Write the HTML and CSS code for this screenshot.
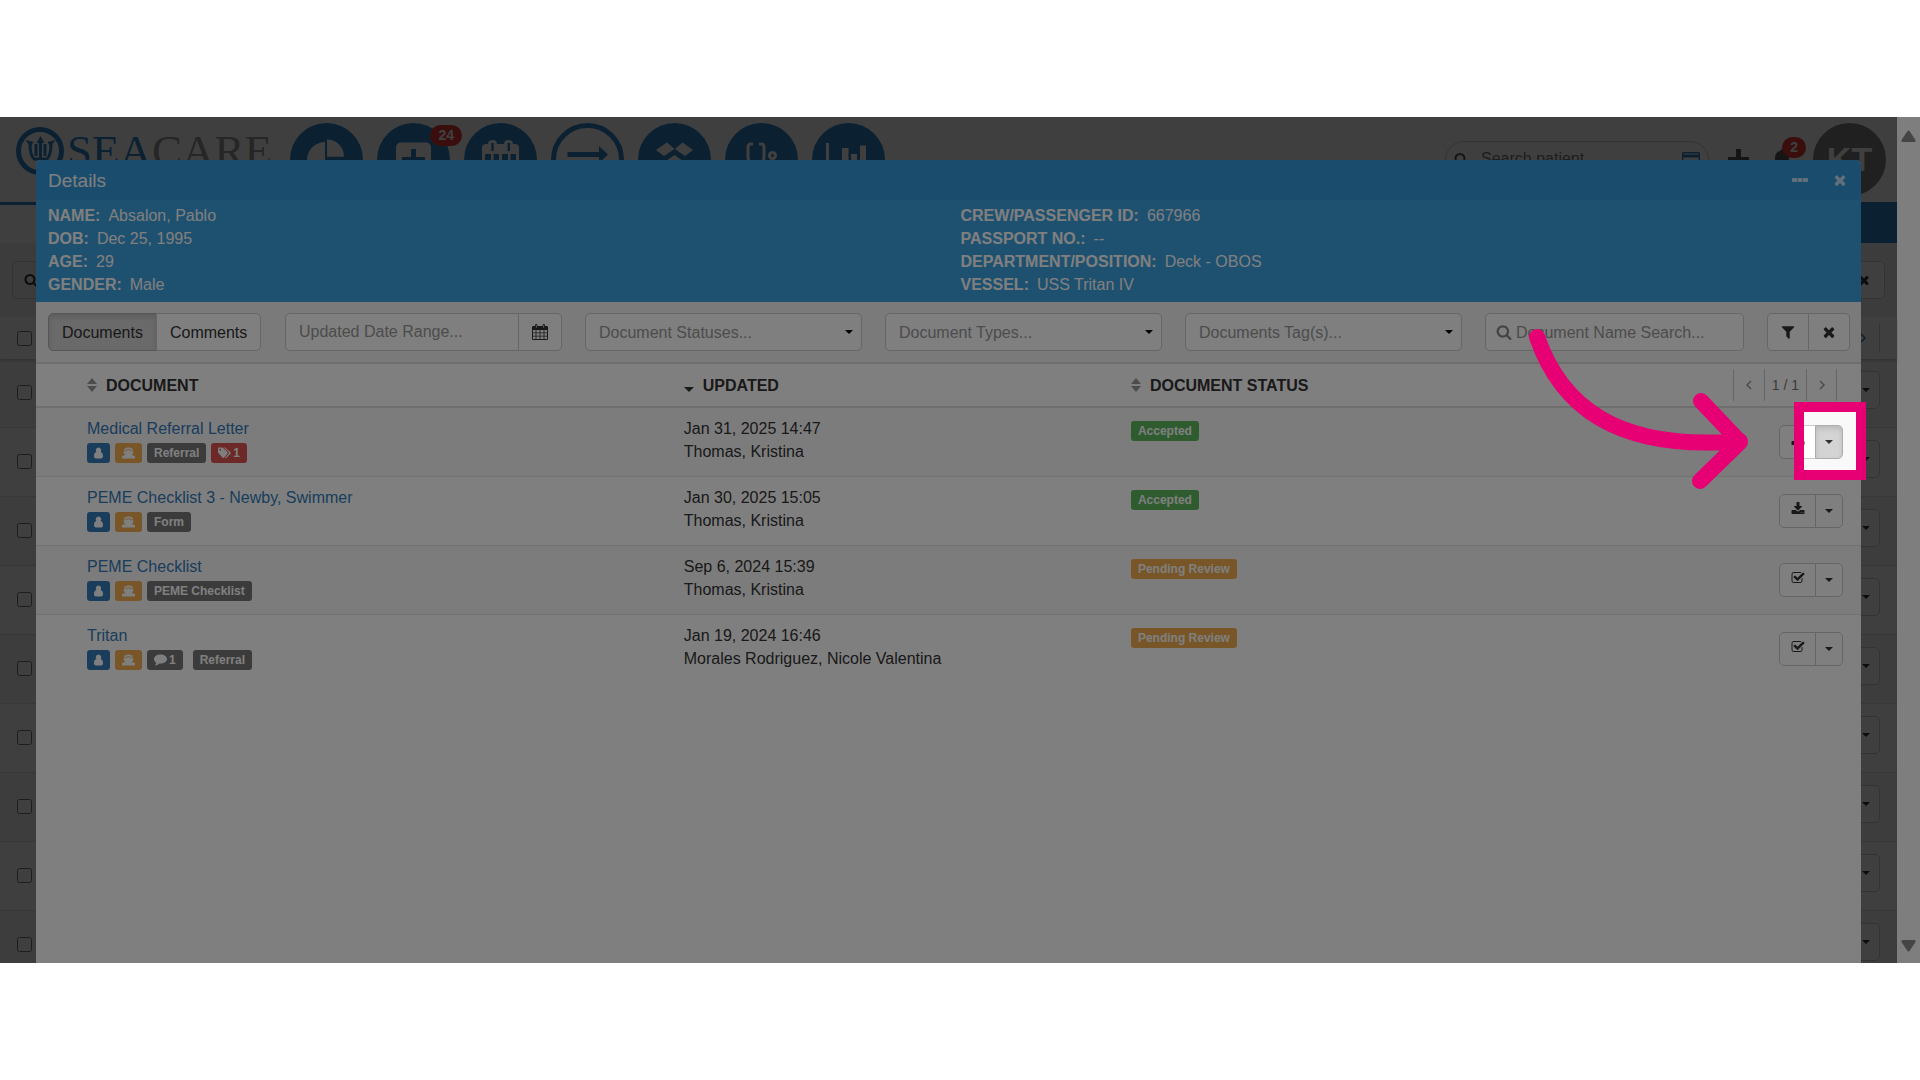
FILE: index.html
```html
<!DOCTYPE html>
<html lang="en">
<head>
    <meta charset="UTF-8">
    <meta name="viewport" content="width=device-width, initial-scale=1">
    <title>SeaCare - Documents</title>
    <link rel="stylesheet" href="styles.css">
</head>
<body>
<!-- icon sprite -->
<svg class="sprite" aria-hidden="true">
    <symbol id="i-search" viewBox="0 0 1792 1792"><path d="M1216 832q0-185-131.500-316.500t-316.500-131.500-316.500 131.500-131.500 316.500 131.500 316.500 316.500 131.500 316.500-131.500 131.500-316.500zm512 832q0 52-38 90t-90 38q-54 0-90-38l-343-342q-179 124-399 124-143 0-273.500-55.500t-225-150-150-225-55.500-273.500 55.500-273.500 150-225 225-150 273.500-55.500 273.500 55.500 225 150 150 225 55.500 273.500q0 220-124 399l343 343q37 37 37 90z"/></symbol>
    <symbol id="i-filter" viewBox="0 0 1792 1792"><path d="M1595 295q17 41-14 70l-493 493v742q0 42-39 59-13 5-25 5-27 0-45-19l-256-256q-19-19-19-45v-486l-493-493q-31-29-14-70 17-39 59-39h1280q42 0 59 39z"/></symbol>
    <symbol id="i-times" viewBox="0 0 1792 1792"><path d="M1490 1322q0 40-28 68l-136 136q-28 28-68 28t-68-28l-294-294-294 294q-28 28-68 28t-68-28l-136-136q-28-28-28-68t28-68l294-294-294-294q-28-28-28-68t28-68l136-136q28-28 68-28t68 28l294 294 294-294q28-28 68-28t68 28l136 136q28 28 28 68t-28 68l-294 294 294 294q28 28 28 68z"/></symbol>
    <symbol id="i-download" viewBox="0 0 1792 1792"><path d="M1344 1344q0-26-19-45t-45-19-45 19-19 45 19 45 45 19 45-19 19-45zm256 0q0-26-19-45t-45-19-45 19-19 45 19 45 45 19 45-19 19-45zm128-224v320q0 40-28 68t-68 28h-1472q-40 0-68-28t-28-68v-320q0-40 28-68t68-28h465l135 136q58 56 136 56t136-56l136-136h464q40 0 68 28t28 68zm-325-569q17 41-14 70l-448 448q-18 19-45 19t-45-19l-448-448q-31-29-14-70 17-39 59-39h256v-448q0-26 19-45t45-19h256q26 0 45 19t19 45v448h256q42 0 59 39z"/></symbol>
    <symbol id="i-check" viewBox="0 0 1792 1792"><path d="M1472 930v318q0 119-84.500 203.500t-203.500 84.500h-832q-119 0-203.500-84.500t-84.500-203.500v-832q0-119 84.500-203.500t203.500-84.500h832q63 0 117 25 15 7 18 23 3 17-9 29l-49 49q-10 10-23 10-3 0-9-2-23-6-45-6h-832q-66 0-113 47t-47 113v832q0 66 47 113t113 47h832q66 0 113-47t47-113v-254q0-13 9-22l64-64q10-10 23-10 6 0 12 3 20 8 20 29zm231-489l-814 814q-24 24-57 24t-57-24l-430-430q-24-24-24-57t24-57l110-110q24-24 57-24t57 24l263 263 647-647q24-24 57-24t57 24l110 110q24 24 24 57t-24 57z"/></symbol>
    <symbol id="i-calendar" viewBox="0 0 16 16"><path fill-rule="evenodd" d="M3 2V1.300Q3 0 4.200 0t1.200 1.300V2h5.200V1.300Q10.600 0 11.800 0T13 1.300V2h1.800q1.200 0 1.200 1.200v11.600q0 1.200-1.200 1.200H1.200Q0 16 0 14.800V3.200Q0 2 1.200 2zM3.900 1.200v2.600h.7V1.200zm7.500 0v2.600h.7V1.200zM1 6v2.500h2.600V6zm3.400 0v2.500h3.200V6zm4 0v2.500h3.200V6zm4 0v2.500H15V6zM1 9.200v2.600h2.600V9.200zm3.400 0v2.600h3.200V9.200zm4 0v2.600h3.200V9.200zm4 0v2.600H15V9.200zM1 12.600V15h2.600v-2.400zm3.400 0V15h3.200v-2.400zm4 0V15h3.200v-2.400zm4 0V15H15v-2.400z"/></symbol>
    <symbol id="i-user" viewBox="0 0 10 12"><path d="M5 0a3 3 0 0 1 2.300 5c1.700.3 2.700 2 2.700 4.600C10 11 9.200 12 8 12H2C.8 12 0 11 0 9.600 0 7 1 5.300 2.700 5A3 3 0 0 1 5 0z"/></symbol>
    <symbol id="i-ship" viewBox="0 0 14 12"><path d="M5 0h4v1h2.400v3.200l1.200.6-1.800 3.400c.5.500 1 .8 1.600.8H14v3H0V9h1.600c.6 0 1.100-.3 1.600-.8L1.400 4.800l1.200-.6V1H5z"/><path class="cut" d="M3.600 3.600L7 2.200l3.400 1.400"/></symbol>
    <symbol id="i-tags" viewBox="0 0 14 12"><path fill-rule="evenodd" d="M0 1q0-1 1-1h4l5.200 5.300q.7.700 0 1.400L6.300 11q-.7.700-1.400 0L0 5.500zm2.300.3a1 1 0 1 0 .1 0z"/><path d="M6.300 0h1.200l5.900 5.300q.7.700 0 1.400L9 11.300q-.7.600-1.500 0l4-4.600q.7-.7 0-1.400z"/></symbol>
    <symbol id="i-comment" viewBox="0 0 14 12"><path d="M7 0c3.900 0 7 2.100 7 4.900S10.900 9.800 7 9.800l-1.300-.1C4.500 10.900 3 11.700 1 12c.8-.8 1.300-1.800 1.400-3.100C.9 8 0 6.500 0 4.900 0 2.100 3.100 0 7 0z"/></symbol>
    <symbol id="i-sort" viewBox="0 0 10 14"><path d="M5 0l5 6H0zM5 14L0 8h10z"/></symbol>
    <symbol id="i-sort-desc" viewBox="0 0 10 14"><path d="M5 14L0 9h10z"/></symbol>
    <symbol id="i-left" viewBox="0 0 8 10"><path class="line" d="M6 1L2 5l4 4"/></symbol>
    <symbol id="i-right" viewBox="0 0 8 10"><path class="line" d="M2 1l4 4-4 4"/></symbol>
</svg>

<div class="stage">
    <div class="app">
        <header class="appHeader">
            <a class="logo" href="#" aria-label="SeaCare">
                <svg width="50" height="50" viewBox="0 0 50 50" aria-hidden="true">
                    <circle class="ring" cx="25" cy="25" r="21.500"/>
                    <path class="prongs" d="M25.500 15v28M15 18c0 7 1 12 4 15h13c3-3 4-8 4-15M21 18v12M30 18v12"/>
                    <path class="tips" d="M25.500 10l4 7h-8zM10.500 14l8 2-3 5zM40.500 14l-8 2 3 5z"/>
                </svg>
                <span class="logoText"><span class="sea">SEA</span>CARE</span>
            </a>
            <nav class="mainNav" aria-label="Main">
                <a href="#" aria-label="Dashboard"><svg viewBox="0 0 73 73">
                    <circle cx="36.500" cy="36.500" r="36.500"/>
                    <path class="on" d="M35 19a18.500 18.500 0 1 0 13 32L35 38zM37 16.500a17 17 0 0 1 17 17.200H37z"/></svg></a>
                <a href="#" aria-label="Medical"><svg viewBox="0 0 73 73">
                    <circle cx="36.500" cy="36.500" r="36.500"/>
                    <rect class="on" x="19" y="19.500" width="35" height="35" rx="5"/>
                    <path d="M34 26h5v8h9v6h-9v9h-5v-9h-9v-6h9z"/></svg><span class="count">24</span></a>
                <a href="#" aria-label="Calendar"><svg viewBox="0 0 73 73">
                    <circle cx="36.500" cy="36.500" r="36.500"/>
                    <path class="on" d="M18 25q0-4 4-4h2q0-4 4.500-4t4.500 4h7q0-4 4.500-4t4.500 4h2q4 0 4 4v29H18z"/>
                    <path d="M27.300 20h2.400v8h-2.400zM43.600 20H46v8h-2.400zM21 31h6v6h-6zm8.500 0H35v6h-5.500zm8.500 0h6v6h-6zm8.500 0H52v6h-5.500z"/></svg></a>
                <a href="#" aria-label="Transfers"><svg viewBox="0 0 73 73">
                    <circle class="ring" cx="36.500" cy="36.500" r="34"/>
                    <path d="M16.500 29H48v-6l9 8.500-9 8.500v-6H16.500z"/></svg></a>
                <a href="#" aria-label="Inventory"><svg viewBox="0 0 73 73">
                    <circle cx="36.500" cy="36.500" r="36.500"/>
                    <path class="on" d="M29 19.500l7.500 6.500-10.500 7-8-6zM44.500 19.500L37 26l10 7 8-6zM36.500 32l10 7-10 7-10-7z"/></svg></a>
                <a href="#" aria-label="Cases"><svg viewBox="0 0 73 73">
                    <circle cx="36.500" cy="36.500" r="36.500"/>
                    <path class="onLine" d="M28 21h-2q-3 0-3 3v10q0 8 8 8t8-8V24q0-3-3-3h-2"/>
                    <circle class="onLine" cx="47.500" cy="32.500" r="3"/></svg></a>
                <a href="#" aria-label="Reports"><svg viewBox="0 0 73 73">
                    <circle cx="36.500" cy="36.500" r="36.500"/>
                    <path class="on" d="M14 20h3v33h-3zM30 25h6.500v25H30zM39 31h6v19h-6zM48 22.500h6V50h-6z"/></svg></a>
            </nav>
            <div class="userTools">
                <div class="patientSearch">
                    <svg class="icon" aria-hidden="true"><use href="#i-search"/></svg>
                    <input type="text" placeholder="Search patient" aria-label="Search patient">
                    <svg class="card" viewBox="0 0 18 14" aria-hidden="true"><path fill-rule="evenodd" d="M1 0h16l1 1v12l-1 1H1l-1-1V1zm.5 1.500v1h15v-1zm0 4v7h15v-7z"/></svg>
                </div>
                <button type="button" class="plain" aria-label="Add"><svg width="21" height="21" viewBox="0 0 21 21"><path d="M8 0h5v8h8v5h-8v8H8v-8H0V8h8z"/></svg></button>
                <button type="button" class="plain bell" aria-label="Notifications"><svg width="18" height="22" viewBox="0 0 18 22"><path d="M9 0q1.500 0 1.500 2Q16 3 16 9q0 6 2 8H0q2-2 2-8 0-6 5.500-7Q7.500 0 9 0zM6.500 18.500h5Q11 21 9 21t-2.500-2.500z"/></svg><span class="count">2</span></button>
                <span class="avatar">KT</span>
            </div>
        </header>
        <div class="subNav"><a href="#" class="tab" aria-label="Documents"></a></div>
        <div class="appFilters">
            <div class="appSearch"><svg class="icon" aria-hidden="true"><use href="#i-search"/></svg></div>
            <button type="button" class="btn" aria-label="Clear filters"><svg class="icon"><use href="#i-times"/></svg></button>
        </div>
        <div class="appHead">
            <input type="checkbox" aria-label="Select all">
            <a href="#" class="next" aria-label="Next page"><svg width="8" height="10"><use href="#i-right"/></svg></a>
        </div>
        <ul class="appRows">
            <li><input type="checkbox" aria-label="Select row 1"><button type="button" class="btn caretBtn" aria-label="Row 1 actions"><i class="caret"></i></button></li>
            <li><input type="checkbox" aria-label="Select row 2"><button type="button" class="btn caretBtn" aria-label="Row 2 actions"><i class="caret"></i></button></li>
            <li><input type="checkbox" aria-label="Select row 3"><button type="button" class="btn caretBtn" aria-label="Row 3 actions"><i class="caret"></i></button></li>
            <li><input type="checkbox" aria-label="Select row 4"><button type="button" class="btn caretBtn" aria-label="Row 4 actions"><i class="caret"></i></button></li>
            <li><input type="checkbox" aria-label="Select row 5"><button type="button" class="btn caretBtn" aria-label="Row 5 actions"><i class="caret"></i></button></li>
            <li><input type="checkbox" aria-label="Select row 6"><button type="button" class="btn caretBtn" aria-label="Row 6 actions"><i class="caret"></i></button></li>
            <li><input type="checkbox" aria-label="Select row 7"><button type="button" class="btn caretBtn" aria-label="Row 7 actions"><i class="caret"></i></button></li>
            <li><input type="checkbox" aria-label="Select row 8"><button type="button" class="btn caretBtn" aria-label="Row 8 actions"><i class="caret"></i></button></li>
            <li><input type="checkbox" aria-label="Select row 9"><button type="button" class="btn caretBtn" aria-label="Row 9 actions"><i class="caret"></i></button></li>
        </ul>
    </div>

    <div class="scrollbar" aria-hidden="true">
        <svg width="15" height="12" viewBox="0 0 15 12"><path d="M6.500 1q1-1 2 0l6 9q.5 2-1 2h-12Q0 12 .5 10z"/></svg>
        <svg width="15" height="12" viewBox="0 0 15 12"><path d="M6.500 11q1 1 2 0l6-9q.5-2-1-2h-12Q0 0 .5 2z"/></svg>
    </div>

    <div class="backdrop">
        <section class="modal" role="dialog" aria-labelledby="modalTitle">
            <div class="modalHeader">
                <h1 id="modalTitle">Details</h1>
                <button type="button" class="plain" aria-label="More"><svg width="16" height="4" viewBox="0 0 16 4"><rect width="5" height="4" rx="1"/><rect x="5.500" width="5" height="4" rx="1"/><rect x="11" width="5" height="4" rx="1"/></svg></button>
                <button type="button" class="plain" aria-label="Close"><svg class="icon big"><use href="#i-times"/></svg></button>
            </div>
            <div class="info">
                <dl>
                    <div><dt>NAME:</dt><dd>Absalon, Pablo</dd></div>
                    <div><dt>DOB:</dt><dd>Dec 25, 1995</dd></div>
                    <div><dt>AGE:</dt><dd>29</dd></div>
                    <div><dt>GENDER:</dt><dd>Male</dd></div>
                </dl>
                <dl>
                    <div><dt>CREW/PASSENGER ID:</dt><dd>667966</dd></div>
                    <div><dt>PASSPORT NO.:</dt><dd>--</dd></div>
                    <div><dt>DEPARTMENT/POSITION:</dt><dd>Deck - OBOS</dd></div>
                    <div><dt>VESSEL:</dt><dd>USS Tritan IV</dd></div>
                </dl>
            </div>
            <form class="toolbar">
                <div class="btnGroup">
                    <button type="button" class="btn active">Documents</button>
                    <button type="button" class="btn">Comments</button>
                </div>
                <div class="btnGroup">
                    <input type="text" class="control" placeholder="Updated Date Range..." aria-label="Updated date range">
                    <button type="button" class="btn" aria-label="Open calendar"><svg class="icon big"><use href="#i-calendar"/></svg></button>
                </div>
                <div class="selectBox"><select class="control" aria-label="Document statuses"><option>Document Statuses...</option></select><i class="caret"></i></div>
                <div class="selectBox"><select class="control" aria-label="Document types"><option>Document Types...</option></select><i class="caret"></i></div>
                <div class="selectBox"><select class="control" aria-label="Documents tags"><option>Documents Tag(s)...</option></select><i class="caret"></i></div>
                <div class="nameSearch">
                    <svg class="icon big" aria-hidden="true"><use href="#i-search"/></svg>
                    <input type="text" placeholder="Document Name Search..." aria-label="Document name search">
                </div>
                <div class="btnGroup even">
                    <button type="button" class="btn" aria-label="Filter"><svg class="icon big"><use href="#i-filter"/></svg></button>
                    <button type="button" class="btn" aria-label="Clear"><svg class="icon big"><use href="#i-times"/></svg></button>
                </div>
            </form>
            <table class="docs">
                <thead>
                <tr>
                    <th class="colDoc"><span class="sort"><svg><use href="#i-sort"/></svg>DOCUMENT</span></th>
                    <th class="colUpd"><span class="sort desc"><svg><use href="#i-sort-desc"/></svg>UPDATED</span></th>
                    <th><span class="sort"><svg><use href="#i-sort"/></svg>DOCUMENT STATUS</span></th>
                    <th class="colAct">
                        <div class="pager">
                            <button type="button" aria-label="Previous page"><svg width="8" height="10"><use href="#i-left"/></svg></button>
                            <span>1 / 1</span>
                            <button type="button" aria-label="Next page"><svg width="8" height="10"><use href="#i-right"/></svg></button>
                        </div>
                    </th>
                </tr>
                </thead>
                <tbody>
                <tr>
                    <td><a href="#">Medical Referral Letter</a>
                        <div class="labels">
                            <span class="label blue"><svg class="user"><use href="#i-user"/></svg></span>
                            <span class="label orange"><svg><use href="#i-ship"/></svg></span>
                            <span class="label">Referral</span>
                            <span class="label red"><svg><use href="#i-tags"/></svg>1</span>
                        </div>
                    </td>
                    <td>Jan 31, 2025 14:47<br>Thomas, Kristina</td>
                    <td><span class="label green">Accepted</span></td>
                    <td class="actions"><div class="btnGroup small"><button type="button" class="btn" aria-label="Download"><svg class="icon"><use href="#i-download"/></svg></button><button type="button" class="btn active" aria-label="More actions"><i class="caret"></i></button></div></td>
                </tr>
                <tr>
                    <td><a href="#">PEME Checklist 3 - Newby, Swimmer</a>
                        <div class="labels">
                            <span class="label blue"><svg class="user"><use href="#i-user"/></svg></span>
                            <span class="label orange"><svg><use href="#i-ship"/></svg></span>
                            <span class="label">Form</span>
                        </div>
                    </td>
                    <td>Jan 30, 2025 15:05<br>Thomas, Kristina</td>
                    <td><span class="label green">Accepted</span></td>
                    <td class="actions"><div class="btnGroup small"><button type="button" class="btn" aria-label="Download"><svg class="icon"><use href="#i-download"/></svg></button><button type="button" class="btn" aria-label="More actions"><i class="caret"></i></button></div></td>
                </tr>
                <tr>
                    <td><a href="#">PEME Checklist</a>
                        <div class="labels">
                            <span class="label blue"><svg class="user"><use href="#i-user"/></svg></span>
                            <span class="label orange"><svg><use href="#i-ship"/></svg></span>
                            <span class="label">PEME Checklist</span>
                        </div>
                    </td>
                    <td>Sep 6, 2024 15:39<br>Thomas, Kristina</td>
                    <td><span class="label orange">Pending Review</span></td>
                    <td class="actions"><div class="btnGroup small"><button type="button" class="btn" aria-label="Review"><svg class="icon"><use href="#i-check"/></svg></button><button type="button" class="btn" aria-label="More actions"><i class="caret"></i></button></div></td>
                </tr>
                <tr>
                    <td><a href="#">Tritan</a>
                        <div class="labels">
                            <span class="label blue"><svg class="user"><use href="#i-user"/></svg></span>
                            <span class="label orange"><svg><use href="#i-ship"/></svg></span>
                            <span class="label comments"><svg><use href="#i-comment"/></svg>1</span>
                            <span class="label">Referral</span>
                        </div>
                    </td>
                    <td>Jan 19, 2024 16:46<br>Morales Rodriguez, Nicole Valentina</td>
                    <td><span class="label orange">Pending Review</span></td>
                    <td class="actions"><div class="btnGroup small"><button type="button" class="btn" aria-label="Review"><svg class="icon"><use href="#i-check"/></svg></button><button type="button" class="btn" aria-label="More actions"><i class="caret"></i></button></div></td>
                </tr>
                </tbody>
            </table>
        </section>
    </div>

    <!-- walkthrough step: dims all but the highlighted button -->
    <div class="spotlight"></div>
    <svg class="arrow" viewBox="0 0 240 180" aria-hidden="true">
        <path d="M17 17C40 83 93 132 220 121M181 81l39 41-40 39"/>
    </svg>
</div>
</body>
</html>
```
FILE: styles.css
```css
* {
    box-sizing: border-box;
}

body {
    margin: 0;
    padding: 117px 0;
    background-color: #fff;
    color: #333;
    font-family: "Liberation Sans", Arial, sans-serif;
    font-size: 16px;
    line-height: 23px;
}

a {
    color: #337ab7;
    text-decoration: none;
}

button, input, select {
    font: inherit;
    color: inherit;
    margin: 0;
}

.sprite {
    position: absolute;
    width: 0;
    height: 0;
}

.icon {
    width: 14px;
    height: 14px;
    fill: currentColor;
}

.icon.big {
    width: 16px;
    height: 16px;
}

.line {
    fill: none;
    stroke: currentColor;
    stroke-width: 1.5;
}

.caret {
    border: 4px solid transparent;
    border-top-color: currentColor;
    border-bottom: 0;
}

.plain {
    display: flex;
    padding: 0;
    border: 0;
    background: none;
    fill: currentColor;
}

.stage {
    position: relative;
    display: flex;
    height: calc(100vh - 234px);
    overflow: hidden;
}

/* ---- page behind the dialog ---- */
.app {
    flex: 1;
    min-width: 0;
}

.appHeader {
    display: flex;
    height: 85px;
    padding: 6px 11px 6px 15px;
}

.logo {
    display: flex;
    width: 275px;
    padding-top: 3px;
}

.logo .ring, .logo .prongs {
    fill: none;
    stroke: #2e86c8;
    stroke-width: 5;
}

.logo .prongs {
    stroke-width: 3;
}

.logo .tips {
    fill: #2e86c8;
}

.logoText {
    margin-left: 2px;
    color: #999;
    font-family: "Liberation Serif", "Times New Roman", serif;
    font-size: 45px;
    line-height: 50px;
}

.sea {
    color: #2e86c8;
}

.mainNav {
    display: flex;
    gap: 14px;
}

.mainNav a {
    position: relative;
    width: 73px;
    height: 73px;
}

.mainNav svg {
    display: block;
    fill: #2e86c8;
}

.mainNav .on {
    fill: #fff;
}

.mainNav .onLine {
    fill: none;
    stroke: #fff;
    stroke-width: 3;
}

.mainNav .ring {
    fill: none;
    stroke: #2e86c8;
    stroke-width: 5;
}

.count {
    position: absolute;
    top: 2px;
    right: -12px;
    padding: 0 8px;
    border-radius: 11px;
    background-color: #e53935;
    color: #fff;
    font-size: 14px;
    font-weight: bold;
    line-height: 21px;
}

.userTools {
    display: flex;
    align-items: center;
    margin-left: auto;
    color: #555;
}

.patientSearch {
    display: flex;
    align-items: center;
    width: 264px;
    height: 38px;
    margin-right: 19px;
    padding: 0 8px 2px;
    border: 1px solid #ccc;
    border-radius: 19px;
}

.patientSearch input {
    flex: 1;
    min-width: 0;
    margin-left: 13px;
    padding: 0;
    border: 0;
    background: none;
}

.patientSearch input::placeholder {
    color: #777;
}

.card {
    width: 18px;
    height: 14px;
    fill: #2e86c8;
}

.bell {
    position: relative;
    margin: 0 22px 0 24px;
}

.bell .count {
    top: -12px;
    right: -15px;
}

.avatar {
    width: 73px;
    border-radius: 50%;
    background-color: #808080;
    color: #fff;
    font-size: 34px;
    font-weight: bold;
    line-height: 73px;
    text-align: center;
}

.subNav {
    height: 41px;
    background-color: #2e86c8;
}

.tab {
    display: block;
    width: 180px;
    height: 41px;
    border-top: 3px solid #2e86c8;
    background-color: #fff;
}

.appFilters {
    display: flex;
    justify-content: space-between;
    padding: 18px 12px;
    background-color: #f0f0f0;
}

.appSearch {
    display: flex;
    align-items: center;
    width: 240px;
    padding-left: 11px;
    border: 1px solid #ccc;
    border-radius: 5px;
}

.appHead {
    display: flex;
    align-items: center;
    justify-content: space-between;
    position: relative;
    height: 42px;
    padding: 0 17px;
    box-shadow: 0 2px 2px #ccc;
}

.appHead input, .appRows input {
    width: 15px;
    height: 15px;
}

.next {
    display: flex;
    align-items: center;
    height: 30px;
    padding-right: 12px;
    border-right: 1px solid #ccc;
}

.appRows {
    margin: 0;
    padding: 0;
    list-style: none;
}

.appRows li {
    display: flex;
    justify-content: space-between;
    height: 69px;
    padding: 12px 17px;
    border-bottom: 1px solid #ddd;
}

.appRows li:nth-child(odd) {
    background-color: #f5f5f5;
}

.appRows input {
    margin-top: 14px;
}

.scrollbar {
    display: flex;
    flex-direction: column;
    align-items: center;
    justify-content: space-between;
    width: 23px;
    padding: 13px 0 11px;
    background-color: #fcfcfc;
    fill: #8b8b8b;
}

/* ---- dialog ---- */
.backdrop {
    position: absolute;
    top: 0;
    right: 23px;
    bottom: 0;
    left: 0;
    padding: 43px 36px 0;
    background-color: rgba(0, 0, 0, 0.5);
}

.modal {
    height: 100%;
    border-radius: 5px 5px 0 0;
    background-color: #fff;
    overflow: hidden;
}

.modalHeader {
    display: flex;
    align-items: center;
    gap: 24px;
    height: 40px;
    padding: 0 13px 0 12px;
    background-color: #3498db;
    color: #fff;
}

.modalHeader h1 {
    flex: 1;
    margin: 0;
    font-size: 19px;
    font-weight: normal;
}

.modalHeader .plain {
    opacity: 0.7;
}

.info {
    display: grid;
    grid-template-columns: 1fr 1fr;
    padding: 4px 0 6px;
    background-color: #3ca2df;
    color: #fff;
}

.info dl {
    margin: 0;
    padding: 0 12px;
}

.info dl div {
    display: flex;
    gap: 8px;
}

.info dt {
    font-weight: bold;
}

.info dd {
    margin: 0;
}

.toolbar {
    display: grid;
    grid-template-columns: 214px repeat(4, 1fr) 259px 83px;
    gap: 23px;
    padding: 11px 11px 11px 12px;
    border-bottom: 2px solid #ddd;
    background-color: #f5f5f5;
}

.btnGroup {
    display: flex;
}

.btn, .control, .nameSearch {
    height: 38px;
    border: 1px solid #ccc;
    border-radius: 5px;
    background-color: #fff;
}

.btn {
    display: flex;
    align-items: center;
    justify-content: center;
    padding: 0 13px;
}

.caretBtn {
    padding: 0 9px;
}

.btnGroup > :first-child {
    border-top-right-radius: 0;
    border-bottom-right-radius: 0;
}

.btnGroup > :last-child {
    margin-left: -1px;
    border-top-left-radius: 0;
    border-bottom-left-radius: 0;
}

.btn.active {
    border-color: #adadad;
    background-color: #d4d4d4;
    box-shadow: inset 0 3px 5px rgba(0, 0, 0, 0.12);
}

.even .btn {
    flex: 1;
    padding: 0;
}

.control {
    width: 100%;
    min-width: 0;
    padding: 0 13px;
    color: #999;
}

::placeholder {
    color: #999;
}

.selectBox {
    position: relative;
}

.selectBox select {
    appearance: none;
}

.selectBox .caret {
    position: absolute;
    top: 17px;
    right: 9px;
    color: #000;
    pointer-events: none;
}

.nameSearch {
    display: flex;
    align-items: center;
    gap: 4px;
    padding: 0 10px;
    color: #888;
}

.nameSearch input {
    flex: 1;
    min-width: 0;
    padding: 0;
    border: 0;
    background: none;
}

.docs {
    width: 100%;
    border-collapse: collapse;
    table-layout: fixed;
}

.docs th {
    height: 43px;
    padding: 0 9px;
    border-bottom: 2px solid #ddd;
    text-align: left;
}

.docs td {
    height: 69px;
    padding: 9px 9px 13px;
    border-bottom: 1px solid #e4e4e4;
    vertical-align: top;
}

.docs tr:last-child td {
    border-bottom: 0;
}

.docs tbody tr:nth-child(odd) {
    background-color: #f9f9f9;
}

.docs th:first-child, .docs td:first-child {
    padding-left: 51px;
}

.colDoc {
    width: 35%;
}

.colUpd {
    width: 24.5%;
}

.colAct {
    width: 160px;
}

.sort {
    display: flex;
    align-items: center;
    gap: 9px;
}

.sort svg {
    width: 10px;
    height: 14px;
    fill: #999;
}

.sort.desc svg {
    fill: #333;
}

.docs th.colAct {
    padding-right: 24px;
}

.pager {
    display: flex;
    justify-content: flex-end;
    color: #777;
    font-size: 14px;
    font-weight: normal;
    line-height: 32px;
}

.pager button, .pager span {
    padding: 0 7px;
    border: 0;
    border-left: 1px solid #ccc;
    background: none;
}

.pager button {
    width: 31px;
    padding: 0;
    color: #999;
}

.pager button:last-child {
    border-right: 1px solid #ccc;
}

.labels {
    display: flex;
    gap: 5px;
    padding-top: 3px;
}

.label {
    display: flex;
    align-items: center;
    gap: 2px;
    width: fit-content;
    height: 20px;
    padding: 0 7px 1px;
    border-radius: 3px;
    background-color: #777;
    color: #fff;
    font-size: 12px;
    font-weight: bold;
    line-height: 18px;
}

.label svg {
    width: 13px;
    height: 12px;
    fill: #fff;
}

.label .user {
    width: 9px;
}

.cut {
    fill: none;
    stroke: #f0ad4e;
}

.blue {
    background-color: #337ab7;
}

.orange {
    background-color: #f0ad4e;
}

.red {
    background-color: #d9534f;
}

.green {
    background-color: #5cb85c;
}

.comments {
    margin-right: 5px;
}

td > .label {
    margin-top: 4px;
}

.docs td.actions {
    padding: 0 18px 0 0;
    vertical-align: middle;
}

.small {
    justify-content: flex-end;
}

.small .btn {
    width: 37px;
    height: 34px;
    padding: 0;
}

.small .btn:last-child {
    width: 28px;
}

.small .icon {
    margin-bottom: 4px;
}

/* ---- walkthrough marks ---- */
.spotlight {
    position: absolute;
    top: 285px;
    right: 54px;
    width: 72px;
    height: 78px;
    border: 10px solid #e60073;
    box-shadow: 0 0 0 2000px rgba(0, 0, 0, 0.5);
    pointer-events: none;
}

.arrow {
    position: absolute;
    top: 203px;
    right: 160px;
    width: 240px;
    height: 180px;
    fill: none;
    stroke: #e60073;
    stroke-width: 16;
    stroke-linecap: round;
    stroke-linejoin: round;
    pointer-events: none;
}
```
